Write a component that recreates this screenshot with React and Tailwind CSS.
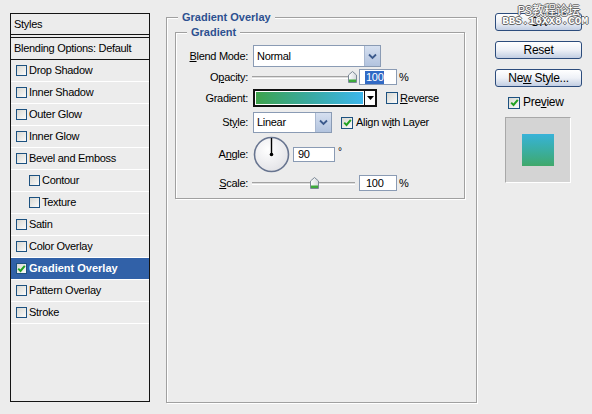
import React from "react";

function Check({ checked = false, size = "w-[11px] h-[11px]" }) {
  return (
    <span
      className={
        size +
        " shrink-0 border border-[#1c5180] bg-linear-to-br from-[#d8d8d2] to-[#fbfbfb] flex items-center justify-center"
      }
    >
      {checked && (
        <svg width="9" height="9" viewBox="0 0 9 9">
          <path d="M1.2 4.6 L3.5 6.9 L7.8 1.8" stroke="#21a121" strokeWidth="2" fill="none" />
        </svg>
      )}
    </span>
  );
}

function Chevron() {
  return (
    <svg width="9" height="7" viewBox="0 0 9 7">
      <path d="M1 1.5 L4.5 5 L8 1.5" stroke="#3c5a8c" strokeWidth="1.8" fill="none" />
    </svg>
  );
}

function Thumb() {
  return (
    <svg width="9" height="12" viewBox="0 0 9 12">
      <defs>
        <linearGradient id="tg" x1="0" y1="0" x2="1" y2="0">
          <stop offset="0" stopColor="#ffffff" />
          <stop offset="1" stopColor="#d4d8dc" />
        </linearGradient>
      </defs>
      <path d="M0.5 4 L4.5 0.5 L8.5 4 V11.5 H0.5 Z" fill="url(#tg)" stroke="#7b8896" />
      <rect x="1" y="8.5" width="7" height="2.5" fill="#3caa3c" />
    </svg>
  );
}

function Slider({ thumb }) {
  return (
    <div className="relative w-[103px] h-[14px] shrink-0">
      <div className="absolute left-0 right-0 top-[6px] h-[3px] border-t border-[#a2a2a2] border-b border-b-white bg-[#dedede]" />
      <div className={"absolute top-[1px] " + thumb}>
        <Thumb />
      </div>
    </div>
  );
}

const items = [
  { label: "Drop Shadow" },
  { label: "Inner Shadow" },
  { label: "Outer Glow" },
  { label: "Inner Glow" },
  { label: "Bevel and Emboss" },
  { label: "Contour", indent: true },
  { label: "Texture", indent: true },
  { label: "Satin" },
  { label: "Color Overlay" },
  { label: "Gradient Overlay", selected: true },
  { label: "Pattern Overlay" },
  { label: "Stroke" },
];

function Label({ children }) {
  return <span className="w-[72px] shrink-0 text-right">{children}</span>;
}

function Button({ children }) {
  return (
    <div className="h-[18px] rounded-[3px] border border-[#2c4c7c] bg-linear-to-b from-white via-[#eef1f7] to-[#c2cee3] flex items-center justify-center text-[12px] text-black">
      {children}
    </div>
  );
}

export default function App() {
  return (
    <div className="relative w-[592px] h-[414px] overflow-hidden bg-[#ececec] flex items-start text-[11px] leading-[13px] text-black tracking-[-0.3px] font-['Liberation_Sans',Arial,sans-serif]">
      {/* Left styles list */}
      <div className="ml-[10px] mt-[13px] w-[140px] h-[389px] shrink-0 border border-[#141414] flex flex-col">
        <div className="h-[21px] shrink-0 flex items-center pl-[3px] border-b border-[#141414]">Styles</div>
        <div className="mt-[2px] h-[23px] shrink-0 flex items-center pl-[3px] border-t border-b border-[#141414]">
          Blending Options: Default
        </div>
        {items.map((it) => (
          <div
            key={it.label}
            className={
              "h-[22px] shrink-0 flex items-center gap-[2px] border-b border-white " +
              (it.indent ? "pl-[18px] " : "pl-[5px] ") +
              (it.selected ? "bg-[#3161a8] text-white font-bold tracking-[0px]" : "")
            }
          >
            <Check checked={!!it.selected} />
            <span>{it.label}</span>
          </div>
        ))}
      </div>

      {/* Main settings */}
      <fieldset className="ml-[16px] mt-[11px] w-[311px] h-[392px] shrink-0 border border-[#a0a0a0] shadow-[1px_1px_0_#fff,inset_1px_1px_0_#fff]">
        <legend className="ml-[11px] px-[4px] leading-[13px] font-bold text-[#2d5090] bg-[#ececec] tracking-[0px]">
          Gradient Overlay
        </legend>
        <fieldset className="ml-[8px] mt-[2px] w-[290px] h-[173px] border border-[#a0a0a0] shadow-[1px_1px_0_#fff,inset_1px_1px_0_#fff]">
          <legend className="ml-[11px] px-[4px] leading-[13px] font-bold text-[#2d5090] bg-[#ececec] tracking-[0px]">
            Gradient
          </legend>
          <div className="pt-[6px] flex flex-col">
            {/* Blend mode */}
            <div className="h-[22px] flex items-center">
              <Label>
                <span className="underline">B</span>lend Mode:
              </Label>
              <div className="ml-[5px] w-[128px] h-[22px] border border-[#8a9bb4] bg-white flex items-center">
                <span className="pl-[3px] flex-1">Normal</span>
                <div className="w-[16px] h-[20px] bg-linear-to-b from-[#d6e0f0] to-[#b2c3de] border-l border-[#a9b8d0] flex items-center justify-center">
                  <Chevron />
                </div>
              </div>
            </div>
            {/* Opacity */}
            <div className="mt-[2px] h-[16px] flex items-center">
              <Label>
                O<span className="underline">p</span>acity:
              </Label>
              <div className="ml-[4px]">
                <Slider thumb="left-[96px]" />
              </div>
              <div className="ml-[4px] w-[38px] h-[16px] border border-[#8a9bb4] bg-white flex items-center pl-[5px]">
                <span className="bg-[#316ac5] text-white px-[1px]">100</span>
              </div>
              <span className="ml-[2px]">%</span>
            </div>
            {/* Gradient */}
            <div className="mt-[4px] h-[18px] flex items-center">
              <Label>Gradient:</Label>
              <div className="ml-[5px] w-[124px] h-[18px] border-2 border-[#111] bg-white flex">
                <div className="flex-1 m-[1px] bg-linear-to-r from-[#3ea24a] via-[#3aa9a0] to-[#3db6ec]" />
                <div className="w-[11px] border-l border-[#111] bg-white flex items-center justify-center">
                  <svg width="7" height="4" viewBox="0 0 7 4">
                    <path d="M0 0 H7 L3.5 4 Z" fill="#000" />
                  </svg>
                </div>
              </div>
              <div className="ml-[9px] flex items-center gap-[2px]">
                <Check size="w-[12px] h-[12px]" />
                <span>
                  <span className="underline">R</span>everse
                </span>
              </div>
            </div>
            {/* Style */}
            <div className="mt-[5px] h-[21px] flex items-center">
              <Label>
                St<span className="underline">y</span>le:
              </Label>
              <div className="ml-[5px] w-[79px] h-[21px] border border-[#8a9bb4] bg-white flex items-center">
                <span className="pl-[3px] flex-1">Linear</span>
                <div className="w-[16px] h-[19px] bg-linear-to-b from-[#d6e0f0] to-[#b2c3de] border-l border-[#a9b8d0] flex items-center justify-center">
                  <Chevron />
                </div>
              </div>
              <div className="ml-[9px] flex items-center gap-[3px]">
                <Check checked size="w-[12px] h-[12px]" />
                <span>
                  Align w<span className="underline">i</span>th Layer
                </span>
              </div>
            </div>
            {/* Angle */}
            <div className="mt-[3px] h-[36px] flex items-center">
              <Label>
                A<span className="underline">n</span>gle:
              </Label>
              <svg className="ml-[5px]" width="37" height="37" viewBox="0 0 37 37">
                <defs>
                  <radialGradient id="cg" cx="0.4" cy="0.35" r="0.7">
                    <stop offset="0" stopColor="#ffffff" />
                    <stop offset="1" stopColor="#e2e2e6" />
                  </radialGradient>
                </defs>
                <circle cx="18.5" cy="18.5" r="17" fill="url(#cg)" stroke="#67748f" strokeWidth="1.6" />
                <line x1="18.5" y1="2" x2="18.5" y2="18.5" stroke="#000" strokeWidth="1.4" />
                <circle cx="18.5" cy="18.5" r="1.8" fill="#000" />
              </svg>
              <div className="ml-[3px] w-[42px] h-[15px] border border-[#8a9bb4] bg-white flex items-center pl-[4px]">
                90
              </div>
              <span className="ml-[3px] -mt-[6px] text-[10px]">°</span>
            </div>
            {/* Scale */}
            <div className="mt-[3px] h-[16px] flex items-center">
              <Label>
                <span className="underline">S</span>cale:
              </Label>
              <div className="ml-[4px]">
                <Slider thumb="left-[58px]" />
              </div>
              <div className="ml-[4px] w-[38px] h-[16px] border border-[#8a9bb4] bg-white flex items-center pl-[6px]">
                100
              </div>
              <span className="ml-[2px]">%</span>
            </div>
          </div>
        </fieldset>
      </fieldset>

      {/* Right buttons */}
      <div className="ml-[18px] mt-[13px] w-[87px] shrink-0 flex flex-col">
        <Button>OK</Button>
        <div className="mt-[10px]">
          <Button>Reset</Button>
        </div>
        <div className="mt-[10px]">
          <Button>
            <span>
              Ne<span className="underline">w</span> Style...
            </span>
          </Button>
        </div>
        <div className="mt-[9px] ml-[13px] flex items-center gap-[3px] text-[12px]">
          <Check checked size="w-[12px] h-[12px]" />
          <span>
            Pre<span className="underline">v</span>iew
          </span>
        </div>
        <div className="mt-[8px] ml-[10px] w-[66px] h-[66px] bg-[#d4d4d4] border border-[#a8a8a8] border-r-white border-b-white flex items-center justify-center">
          <div className="w-[32px] h-[32px] bg-linear-to-b from-[#38b2d8] to-[#40a86a]" />
        </div>
      </div>

      {/* Watermark */}
      <div className="absolute left-[500px] top-[3px] w-[88px] flex flex-col items-end text-white tracking-[0px] [text-shadow:1px_0_#666,-1px_0_#666,0_1px_#666,0_-1px_#666]">
        <span className="text-[12px] leading-[13px] pr-[8px] font-['Noto_Sans_CJK_SC',sans-serif]">PS教程论坛</span>
        <span className="text-[11px] leading-[11px] font-['Liberation_Mono',monospace] font-bold">BBS.16XX8.COM</span>
      </div>
    </div>
  );
}
